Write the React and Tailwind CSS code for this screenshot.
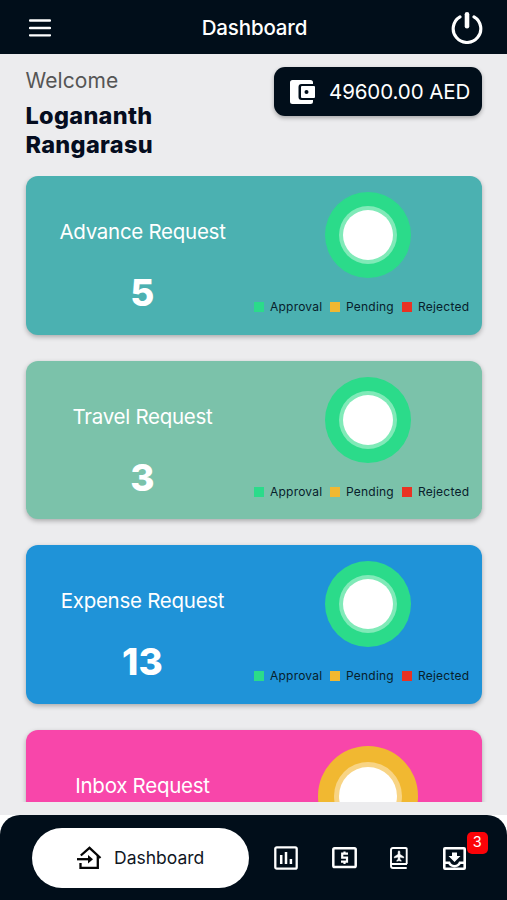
const cards = [
  { title: 'Advance Request', count: 5, bg: 'bg-[#4bb1b1]' },
  { title: 'Travel Request', count: 3, bg: 'bg-[#7bc2aa]' },
  { title: 'Expense Request', count: 13, bg: 'bg-[#1f93d8]' },
];

const legend = [
  { label: 'Approval', color: 'bg-[#2bdb8a]', width: 'w-[52px]' },
  { label: 'Pending', color: 'bg-[#f1b831]', width: 'w-[48px]' },
  { label: 'Rejected', color: 'bg-[#e93223]', width: 'w-[52px]' },
];

function Ring({ pending }) {
  if (pending) {
    return (
      <svg className="mt-4 h-[100px] w-[100px]" viewBox="0 0 100 100">
        <circle cx="50" cy="50" r="50" fill="#f1b831" />
        <circle cx="50" cy="50" r="34" fill="#f8d484" />
        <circle cx="50" cy="50" r="29" fill="#fff" />
      </svg>
    );
  }
  return (
    <svg className="mt-[15.8px] h-[86px] w-[86px]" viewBox="0 0 86 86">
      <circle cx="43" cy="43" r="43" fill="#2bdb8a" />
      <circle cx="43" cy="43" r="29" fill="#80eab8" />
      <circle cx="43" cy="43" r="25" fill="#fff" />
    </svg>
  );
}

function Card({ title, count, bg, pending }) {
  return (
    <section className={`flex h-[158.5px] shrink-0 rounded-[12px] shadow-[0_2px_5px_rgba(0,0,0,0.28)] ${bg}`}>
      <div className="flex w-[234px] flex-col items-center text-white">
        <h2 className="mt-[42.2px] text-[20.5px] leading-7 tracking-[-0.27px] whitespace-nowrap">{title}</h2>
        {count !== undefined && <p className="mt-[26.8px] text-[37px] leading-10 font-extrabold tracking-[0.3px]">{count}</p>}
      </div>
      <div className="flex w-[217px] flex-col items-center">
        <Ring pending={pending} />
        {!pending && (
          <div className="mt-[21.2px] mr-[6.5px] flex items-center gap-2 self-end">
            {legend.map((l) => (
              <div key={l.label} className="flex items-center gap-[6px]">
                <span className={`h-[10px] w-[10px] ${l.color}`} />
                <span className={`text-[12px] leading-4 tracking-[0.22px] whitespace-nowrap text-[#07202b] ${l.width}`}>
                  {l.label}
                </span>
              </div>
            ))}
          </div>
        )}
      </div>
    </section>
  );
}

export default function App() {
  return (
    <div className="flex h-[900px] w-[507px] flex-col overflow-hidden bg-white font-['Inter',sans-serif]">
      <header className="flex h-[54px] shrink-0 items-center justify-between bg-[#010e1a] pt-[1px] pr-[24px] pl-[29px] text-white">
        <svg className="h-[18px] w-[22px]" viewBox="0 0 22 18" stroke="#fff" strokeWidth="2.3" strokeLinecap="round">
          <path d="M1 1.5h20M1 9h20M1 16.3h20" />
        </svg>
        <h1 className="ml-[7px] text-[20.5px] leading-7 font-medium tracking-[-0.15px]">Dashboard</h1>
        <svg className="h-[32px] w-[32px]" viewBox="0 0 32 32" fill="none" stroke="#fff" strokeLinecap="round">
          <path d="M9 4.800A13.800 13.800 0 1 0 23 4.800" strokeWidth="3.100" />
          <path d="M16 2.300v12" strokeWidth="4.600" />
        </svg>
      </header>

      <main className="flex h-[761px] shrink-0 flex-col bg-[#ececee] px-[25.5px]">
        <div className="flex h-[122px] shrink-0 items-start justify-between">
          <div>
            <p className="mt-[12.5px] text-[21px] leading-7 tracking-[0.1px] text-[#555]">Welcome</p>
            <p className="mt-[6px] text-[23.500px] leading-[29px] font-extrabold tracking-[0.3px] text-[#050d20]">
              Logananth
              <br />
              Rangarasu
            </p>
          </div>
          <div className="mt-[13px] flex h-[48.5px] w-[208px] items-center rounded-[11px] bg-[#010e1a] pt-[1px] pl-[16px] text-white shadow-[0_2px_4px_rgba(0,0,0,0.3)]">
            <svg className="h-6 w-[25px] shrink-0" viewBox="0 0 25 24">
              <path
                d="M2.5 0H20.5Q23 0 23 2.5V4H11.500Q8.500 4 8.500 7V17Q8.500 20 11.500 20H23V21.500Q23 24 20.500 24H2.500Q0 24 0 21.500V2.500Q0 0 2.500 0Z"
                fill="#fff"
              />
              <rect x="11" y="6" width="14" height="12" rx="1" fill="#fff" />
              <circle cx="16.500" cy="12" r="2" fill="#010e1a" />
            </svg>
            <span className="ml-[14.5px] text-[20.5px] leading-7 tracking-[-0.1px] whitespace-nowrap">49600.00 AED</span>
          </div>
        </div>

        <div className="-mx-[25.5px] flex h-[626px] shrink-0 flex-col gap-[26px] overflow-hidden px-[25.5px] pt-[0.3px]">
          {cards.map((c) => (
            <Card key={c.title} {...c} />
          ))}
          <Card title="Inbox Request" bg="bg-[#f846aa]" pending />
        </div>
      </main>

      <nav className="flex h-[85px] shrink-0 items-center rounded-t-[20px] bg-[#010e1a] pt-[1px] pl-[31.5px]">
        <div className="flex h-[60px] w-[217px] shrink-0 items-center rounded-full bg-white pl-[45.5px]">
          <svg className="h-[24px] w-[25px] shrink-0" viewBox="0 0 25 24" fill="none" stroke="#050505" strokeWidth="2.300">
            <path d="M3.800 9.500L12.500 1.900L23.500 12" />
            <path d="M20.800 9.500V21.900H3.500V17" />
            <path d="M0 13.200H12" />
            <path d="M11 9L16 13.200L11 17.500Z" fill="#050505" stroke="none" />
          </svg>
          <span className="ml-[12px] text-[17.5px] leading-6 text-[#10161f]">Dashboard</span>
        </div>
        <svg className="ml-[25px] h-[24px] w-[24px] shrink-0" viewBox="0 0 24 24" fill="none" stroke="#fff">
          <rect x="1.300" y="1.300" width="21.400" height="21.400" rx="1.500" strokeWidth="2.300" />
          <path d="M7.200 9v9M12 6v12M16.900 13v5" strokeWidth="2.500" />
        </svg>
        <svg className="ml-[34px] h-[22px] w-[25px] shrink-0" viewBox="0 0 25 22" fill="none" stroke="#fff">
          <rect x="1.300" y="1.300" width="22.400" height="18.800" rx="1.300" strokeWidth="2.500" />
          <path d="M16 6.700H10.200V10.600H15V14.700H9M12.500 4.500V6.700M12.500 14.700V17" strokeWidth="2.200" />
        </svg>
        <svg className="ml-[33.500px] h-[22px] w-[18px] shrink-0" viewBox="0 0 18 22">
          <path d="M16.700 17V2Q16.700 1 15.700 1H3Q1 1 1 3V19Q1 21 3 21H16.700M1.500 17H17" fill="none" stroke="#fff" strokeWidth="1.900" />
          <path d="M8.100 4.500Q9 3 9.900 4.500V7.300L13.700 9.800V11L9.900 10V12.300L11.200 13.400V14.300L9 13.700L6.800 14.300V13.400L8.100 12.300V10L4.300 11V9.800L8.100 7.300Z" fill="#fff" stroke="#fff" strokeWidth="0.500" />
        </svg>
        <div className="relative ml-[35px] h-[23px] w-[23px] shrink-0">
          <svg className="h-[23px] w-[23px]" viewBox="0 0 23 23">
            <path
              fillRule="evenodd"
              d="M2 0H21Q23 0 23 2V21Q23 23 21 23H2Q0 23 0 21V2Q0 0 2 0ZM2.600 2.600V14.600H7Q8 18 11.500 18Q15 18 16 14.600H20.400V2.600ZM2.600 17V20.400H20.400V17H17.700Q15.500 20.300 11.500 20.300Q7.500 20.300 5.300 17Z"
              fill="#fff"
            />
            <path d="M9 5.500H14V9H17.500L11.500 15L5.500 9H9Z" fill="#fff" />
          </svg>
          <span className="absolute -top-[15px] left-[23.5px] flex h-[22px] w-[21.5px] items-center justify-center rounded-[5px] bg-[#fb0308] text-[14.500px] leading-none text-white">
            3
          </span>
        </div>
      </nav>
    </div>
  );
}
